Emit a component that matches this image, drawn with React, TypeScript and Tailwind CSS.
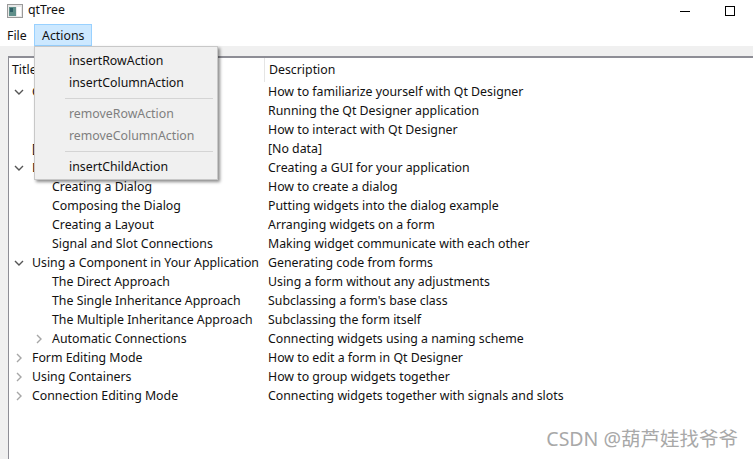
import React from "react";

const font = { fontFamily: '"Noto Sans","Noto Sans CJK SC",sans-serif' };

type Row = { t: string; d: string; lvl: number; c?: "open" | "closed" };
const rows: Row[] = [
  { t: "Getting Started", d: "How to familiarize yourself with Qt Designer", lvl: 0, c: "open" },
  { t: "Launching Designer", d: "Running the Qt Designer application", lvl: 1 },
  { t: "The User Interface", d: "How to interact with Qt Designer", lvl: 1 },
  { t: "[No data]", d: "[No data]", lvl: 0 },
  { t: "Designing a Component", d: "Creating a GUI for your application", lvl: 0, c: "open" },
  { t: "Creating a Dialog", d: "How to create a dialog", lvl: 1 },
  { t: "Composing the Dialog", d: "Putting widgets into the dialog example", lvl: 1 },
  { t: "Creating a Layout", d: "Arranging widgets on a form", lvl: 1 },
  { t: "Signal and Slot Connections", d: "Making widget communicate with each other", lvl: 1 },
  { t: "Using a Component in Your Application", d: "Generating code from forms", lvl: 0, c: "open" },
  { t: "The Direct Approach", d: "Using a form without any adjustments", lvl: 1 },
  { t: "The Single Inheritance Approach", d: "Subclassing a form's base class", lvl: 1 },
  { t: "The Multiple Inheritance Approach", d: "Subclassing the form itself", lvl: 1 },
  { t: "Automatic Connections", d: "Connecting widgets using a naming scheme", lvl: 1, c: "closed" },
  { t: "Form Editing Mode", d: "How to edit a form in Qt Designer", lvl: 0, c: "closed" },
  { t: "Using Containers", d: "How to group widgets together", lvl: 0, c: "closed" },
  { t: "Connection Editing Mode", d: "Connecting widgets together with signals and slots", lvl: 0, c: "closed" },
];

function Chevron({ open, color }: { open: boolean; color: string }) {
  return (
    <svg width="10" height="10" viewBox="0 0 10 10" fill="none" stroke={color} strokeWidth="1.4" className="-mt-[1px]">
      {open ? <path d="M1 3l4 4 4-4" /> : <path d="M3 1l4 4-4 4" />}
    </svg>
  );
}

export default function App() {
  return (
    <div className="relative w-[753px] h-[459px] overflow-hidden bg-white text-[12.33px] text-[#111]" style={font}>
      <div className="h-[24px] flex items-center pl-[7px] pb-[2px]">
        <svg width="16" height="16" viewBox="0 0 16 16">
          <rect x="0.5" y="1.5" width="15" height="13" fill="#e8e8e8" stroke="#9a9a9a" />
          <rect x="2" y="4" width="7" height="9" fill="#5f8f8a" />
          <rect x="3" y="5" width="3" height="4" fill="#2e5f66" />
          <rect x="10" y="4" width="4" height="9" fill="#fff" />
        </svg>
        <span className="ml-[5px] -mt-[2px]">qtTree</span>
        <div className="ml-auto flex items-center">
          <div className="w-[10px] h-[1px] bg-black mr-[35px]" />
          <div className="w-[10px] h-[10px] border border-black mr-[18px]" />
        </div>
      </div>
      <div className="h-[22px] flex">
        <div className="w-[34px] pl-[7px] pt-[2px] flex items-center">File</div>
        <div className="w-[58px] pl-[7px] pt-[2px] flex items-center bg-[#cce8ff] border border-[#99d1ff]">Actions</div>
      </div>
      <div className="h-[10px] bg-[#f0f0f0]" />
      <div className="flex h-[403px]">
        <div className="w-[8px] bg-[#f0f0f0]" />
        <div className="flex-1 border-t-2 border-l border-[#8e8e96]">
          <div className="flex h-[25px]">
            <div className="w-[255px] pl-[3px] h-[24px] flex items-center">Title</div>
            <div className="border-l border-[#e5e5e5] h-[24px] pl-[4px] flex items-center">Description</div>
          </div>
          <div>
            {rows.map((r) => (
              <div key={r.t + r.d} className="flex h-[19px] items-center whitespace-nowrap">
                <div className={r.lvl === 1 ? "w-[257px] shrink-0 flex items-center pl-[25px]" : "w-[257px] shrink-0 flex items-center pl-[5px]"}>
                  <div className="w-[18px] shrink-0 flex items-center">
                    {r.c && <Chevron open={r.c === "open"} color={r.c === "open" ? "#555" : "#a6a6a6"} />}
                  </div>
                  <span>{r.t}</span>
                </div>
                <div className="pl-[2px]">{r.d}</div>
              </div>
            ))}
          </div>
        </div>
      </div>
      <div className="absolute left-[34px] top-[46px] w-[184px] h-[134px] bg-[#f0f0f0] border border-[#c8c8c8] shadow-[2px_2px_3px_rgba(0,0,0,0.45)] flex flex-col">
        <div className="h-[22px] flex items-center pl-[34px] mt-[3px]">insertRowAction</div>
        <div className="h-[22px] flex items-center pl-[34px]">insertColumnAction</div>
        <div className="h-px bg-[#d4d4d4] ml-[30px] mr-[4px] my-[4px]" />
        <div className="h-[22px] flex items-center pl-[34px] text-[#7f7f7f]">removeRowAction</div>
        <div className="h-[22px] flex items-center pl-[34px] text-[#7f7f7f]">removeColumnAction</div>
        <div className="h-px bg-[#d4d4d4] ml-[30px] mr-[4px] my-[4px]" />
        <div className="h-[22px] flex items-center pl-[34px]">insertChildAction</div>
      </div>
      <div className="absolute right-[15px] top-[428px] text-[19.5px] leading-[22px] text-[#a8a8a8]">CSDN @葫芦娃找爷爷</div>
    </div>
  );
}
